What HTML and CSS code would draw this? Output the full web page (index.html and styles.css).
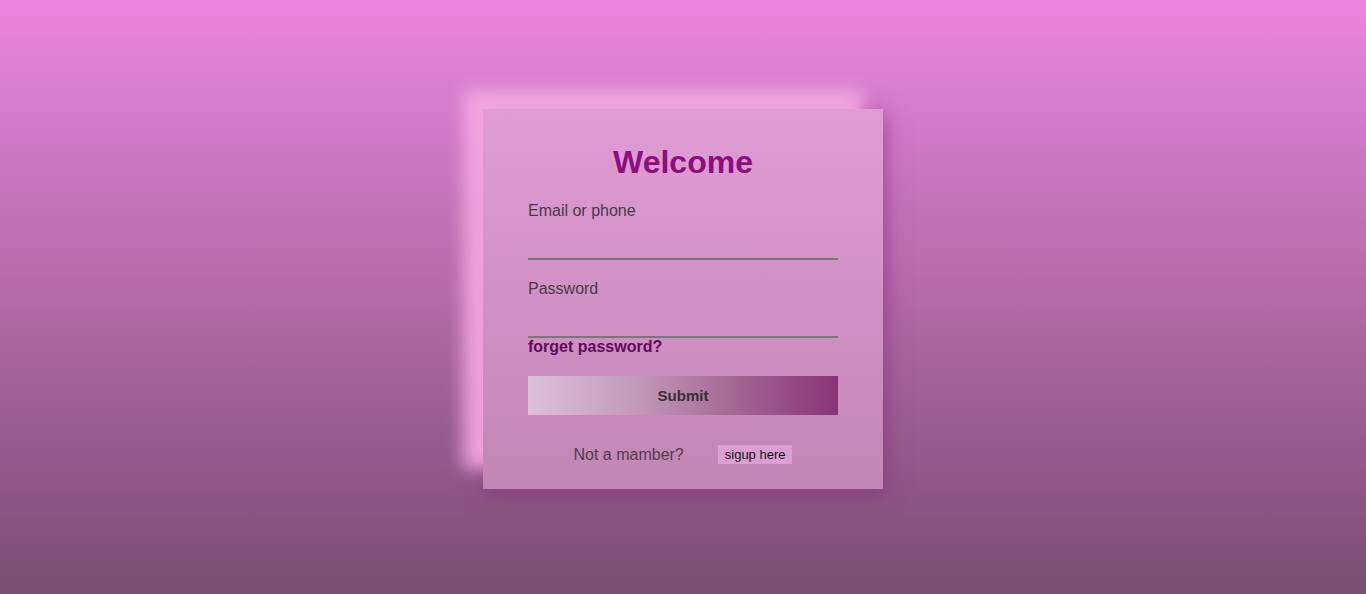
FILE: index.html
```html
<!DOCTYPE html>
<html lang="en">
<head>
<meta charset="utf-8">
<title>Welcome</title>
<link rel="stylesheet" href="styles.css">
</head>
<body>
<main class="page">
  <form class="card">
    <h1 class="title">Welcome</h1>
    <label class="label" for="email">Email or phone</label>
    <input class="field" id="email" type="text">
    <label class="label label-next" for="pass">Password</label>
    <input class="field" id="pass" type="password">
    <a class="forget" href="#">forget password?</a>
    <button class="submit" type="button">Submit</button>
    <div class="signup-row">
      <span class="signup-text">Not a mamber?</span>
      <button class="signup-btn" type="button">sigup here</button>
    </div>
  </form>
</main>
</body>
</html>
```
FILE: styles.css
```css
* { box-sizing: border-box; }
html, body {
  margin: 0;
  padding: 0;
  height: 100%;
}
body {
  font-family: "Liberation Sans", Arial, sans-serif;
  background: linear-gradient(to bottom, #ea86de 0%, #7a4d72 100%);
  overflow: hidden;
}
.page {
  height: 594px;
  display: flex;
  justify-content: center;
  padding-top: 109px;
}
.card {
  width: 400px;
  height: 380px;
  padding: 35px 45px 0 45px;
  display: flex;
  flex-direction: column;
  background: linear-gradient(to bottom, #e19cd5 0%, #c186b4 100%);
  box-shadow: -20px -20px 16px rgba(246, 168, 228, 0.9),
              2px 4px 20px rgba(125, 35, 115, 0.55);
}
.title {
  margin: 0;
  font-size: 32px;
  line-height: 37px;
  font-weight: bold;
  text-align: center;
  color: #8e0d7e;
}
.label {
  margin-top: 21px;
  font-size: 16px;
  line-height: 18px;
  color: #483a48;
}
.label-next { margin-top: 20px; }
.field {
  display: block;
  width: 100%;
  height: 40px;
  border: none;
  border-bottom: 2px solid #777777;
  background: transparent;
  outline: none;
  font-family: inherit;
  font-size: 16px;
  padding: 0;
}
.forget {
  font-size: 16px;
  line-height: 18px;
  font-weight: bold;
  color: #610a5d;
  text-decoration: none;
}
.submit {
  margin-top: 20px;
  height: 39px;
  width: 100%;
  border: none;
  background: linear-gradient(to right, #dbc2d8 0%, #c39ab9 35%, #a0628f 70%, #893379 100%);
  font-family: inherit;
  font-size: 15px;
  font-weight: bold;
  color: #333333;
}
.signup-row {
  margin-top: 30px;
  display: flex;
  justify-content: center;
  align-items: center;
  gap: 34px;
}
.signup-text {
  font-size: 16px;
  line-height: 18px;
  color: #4f3c4f;
}
.signup-btn {
  height: 19px;
  padding: 0 7px;
  border: none;
  background: #dc9fd4;
  font-family: inherit;
  font-size: 13px;
  line-height: 15px;
  color: #111111;
}
```
